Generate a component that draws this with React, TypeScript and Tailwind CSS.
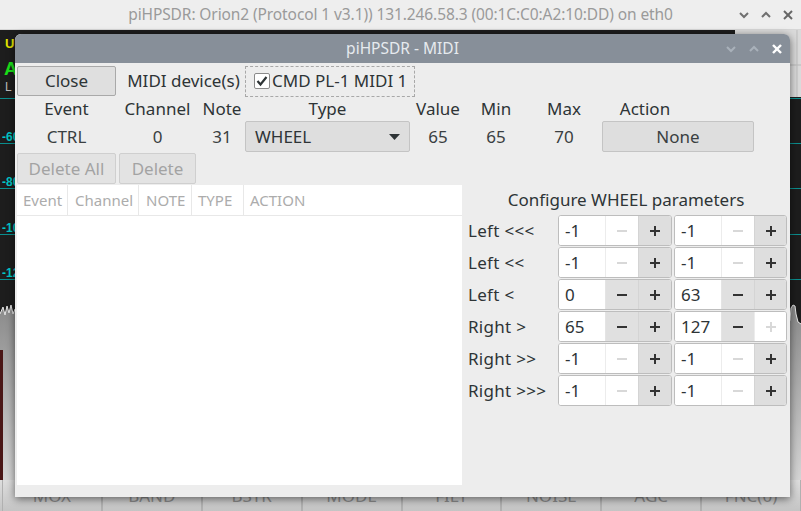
import React from "react";

const FONT = "font-['Noto_Sans',sans-serif]";

function Minus({ on }: { on: boolean }) {
  return (
    <svg width="12" height="12" viewBox="0 0 12 12">
      <line x1="1" y1="6" x2="11" y2="6" stroke={on ? "#333" : "#d8d8d8"} strokeWidth="2" />
    </svg>
  );
}

function Plus({ on }: { on: boolean }) {
  return (
    <svg width="12" height="12" viewBox="0 0 12 12">
      <line x1="1" y1="6" x2="11" y2="6" stroke={on ? "#333" : "#d8d8d8"} strokeWidth="2" />
      <line x1="6" y1="1" x2="6" y2="11" stroke={on ? "#333" : "#d8d8d8"} strokeWidth="2" />
    </svg>
  );
}

function Spin({ value, minus, plus, w }: { value: string; minus: boolean; plus: boolean; w: string }) {
  return (
    <div className={`flex h-[31px] border border-[#bdbdbd] rounded-[3px] overflow-hidden bg-white ${w}`}>
      <div className="w-[46px] flex items-center pl-[6px] text-[#2e3436] bg-white">{value}</div>
      <div
        className={
          minus
            ? "w-[33px] flex items-center justify-center border-l border-[#e4e4e4] bg-[#e0e0e0]"
            : "w-[33px] flex items-center justify-center border-l border-[#ececec] bg-white"
        }
      >
        <Minus on={minus} />
      </div>
      <div
        className={
          plus
            ? "flex-1 flex items-center justify-center border-l border-[#d4d4d4] bg-[#dedede]"
            : "flex-1 flex items-center justify-center border-l border-[#ececec] bg-white"
        }
      >
        <Plus on={plus} />
      </div>
    </div>
  );
}

function ChevDown({ color, sw = 2 }: { color: string; sw?: number }) {
  return (
    <svg width="10" height="8" viewBox="0 0 10 8">
      <polyline points="1,2 5,6 9,2" fill="none" stroke={color} strokeWidth={sw} />
    </svg>
  );
}
function ChevUp({ color, sw = 2 }: { color: string; sw?: number }) {
  return (
    <svg width="10" height="8" viewBox="0 0 10 8">
      <polyline points="1,6 5,2 9,6" fill="none" stroke={color} strokeWidth={sw} />
    </svg>
  );
}
function Close({ color, sw = 2 }: { color: string; sw?: number }) {
  return (
    <svg width="10" height="10" viewBox="0 0 10 10">
      <line x1="1" y1="1" x2="9" y2="9" stroke={color} strokeWidth={sw} />
      <line x1="9" y1="1" x2="1" y2="9" stroke={color} strokeWidth={sw} />
    </svg>
  );
}

const rows: { label: string; a: [string, boolean, boolean]; b: [string, boolean, boolean] }[] = [
  { label: "Left <<<", a: ["-1", false, true], b: ["-1", false, true] },
  { label: "Left <<", a: ["-1", false, true], b: ["-1", false, true] },
  { label: "Left <", a: ["0", true, true], b: ["63", true, true] },
  { label: "Right >", a: ["65", true, true], b: ["127", true, false] },
  { label: "Right >>", a: ["-1", false, true], b: ["-1", false, true] },
  { label: "Right >>>", a: ["-1", false, true], b: ["-1", false, true] },
];

const bottomButtons = ["MOX", "BAND", "BSTR", "MODE", "FILT", "NOISE", "AGC", "FNC(0)"];

function Panadapter() {
  const lines = [68, 113, 158, 204, 249, 295];
  const labels = [
    { t: "-60", y: 111 },
    { t: "-80", y: 156 },
    { t: "-100", y: 202 },
    { t: "-120", y: 247 },
    { t: "-140", y: 293 },
  ];
  return (
    <svg width="801" height="450" viewBox="0 0 801 450" className="block">
      <defs>
        <linearGradient id="fillg" x1="0" y1="0" x2="0" y2="1">
          <stop offset="0" stopColor="#8a8a8a" />
          <stop offset="1" stopColor="#d4d4d4" />
        </linearGradient>
      </defs>
      <rect x="0" y="0" width="801" height="450" fill="#1d1d1d" />
      <rect x="735" y="0" width="66" height="67" fill="#dadada" />
      <line x1="735" y1="35" x2="801" y2="35" stroke="#b8b8b8" />
      <line x1="797" y1="0" x2="797" y2="67" stroke="#bdbdbd" />
      {lines.map((y) => (
        <line key={y} x1="0" y1={y + 0.5} x2="801" y2={y + 0.5} stroke="#0b8e8e" strokeWidth="1" />
      ))}
      {labels.map((l) => (
        <text key={l.t} x="2" y={l.y} fill="#00c6c6" fontSize="12" fontFamily="Liberation Sans, sans-serif" fontWeight="bold">
          {l.t}
        </text>
      ))}
      <text x="5" y="18" fill="#e6e600" fontSize="13" fontWeight="bold" fontFamily="Liberation Sans, sans-serif">U</text>
      <text x="4" y="45" fill="#19e019" fontSize="19" fontWeight="bold" fontFamily="Liberation Sans, sans-serif">A</text>
      <text x="5" y="61" fill="#bdbdbd" fontSize="12" fontFamily="Liberation Sans, sans-serif">L</text>
      <polygon points="0,284 3,277 5,285 7,276 9,283 11,275 13,284 15,279 15,450 0,450" fill="url(#fillg)" />
      <polyline points="0,284 3,277 5,285 7,276 9,283 11,275 13,284 15,279" fill="none" stroke="#e8e8e8" strokeWidth="1" />
      <polygon points="788,296 790,290 791,278 793,275 795,276 796,284 798,292 801,294 801,450 788,450" fill="url(#fillg)" />
      <polyline points="788,296 790,290 791,278 793,275 795,276 796,284 798,292 801,294" fill="none" stroke="#e8e8e8" strokeWidth="1" />
      <rect x="0" y="320" width="3" height="130" fill="#4a1616" />
    </svg>
  );
}

export default function App() {
  return (
    <div className={`relative w-[801px] h-[511px] overflow-hidden bg-[#1d1d1d] ${FONT}`}>
      {/* outer window title */}
      <div className="relative h-[30px] bg-[#eeeeee] border-b border-[#d6d6d6] flex items-center justify-center">
        <span className="text-[15.5px] text-[#9a9a9a] tracking-[-0.1px]">
          piHPSDR: Orion2 (Protocol 1 v3.1)) 131.246.58.3 (00:1C:C0:A2:10:DD) on eth0
        </span>
        <div className="absolute right-[8px] top-0 h-[30px] flex items-center gap-[12px]">
          <ChevDown color="#707070" />
          <ChevUp color="#707070" />
          <Close color="#666" />
        </div>
      </div>

      <Panadapter />

      {/* bottom buttons */}
      <div className="h-[31px] flex pl-[2px] bg-gradient-to-b from-[#dedede] to-[#c4c4c4]">
        {bottomButtons.map((b) => (
          <div key={b} className="flex-1 flex items-center justify-center border-l border-r border-[#b0b0b0] text-[17px] text-[#8a8a8a]">
            {b}
          </div>
        ))}
      </div>

      {/* MIDI dialog */}
      <div className="absolute left-[15px] top-[34px] w-[775px] h-[463px] rounded-t-[6px] overflow-hidden bg-[#ededed] shadow-[0_2px_8px_rgba(0,0,0,0.55)] flex flex-col">
        <div className="relative h-[29px] bg-[#878f99] flex items-center justify-center">
          <span className="text-[15.5px] text-[#e6eaee]">piHPSDR - MIDI</span>
          <div className="absolute right-[8px] top-0 h-[29px] flex items-center gap-[13px]">
            <ChevDown color="#a9b1ba" />
            <ChevUp color="#a9b1ba" />
            <Close color="#ffffff" sw={2.4} />
          </div>
        </div>

        <div className="flex-1 flex flex-col pl-[2px] pt-[2px] text-[17px] text-[#2e3436]">
          <div className="grid grid-cols-[102px_80px_46px_165px_56px_60px_76px_152px]">
            {/* row 1 */}
            <div className="h-[32px] flex items-center">
              <button className="w-[99px] h-[30px] bg-[#dfdfdf] border border-[#a9a9a9] rounded-[2px] text-[#2e3436]">Close</button>
            </div>
            <div className="col-span-2 h-[32px] flex items-center justify-center pl-[3px]">MIDI device(s)</div>
            <div className="col-span-2 h-[32px] flex items-center">
              <div className="w-[170px] h-[31px] border border-dashed border-[#a8a8a8] flex items-center pl-[8px] gap-[2px]">
                <div className="w-[16px] h-[16px] bg-white border border-[#8a8a8a] rounded-[2px] flex items-center justify-center">
                  <svg width="12" height="12" viewBox="0 0 12 12">
                    <polyline points="1.5,6 4.5,9.5 10.5,2" fill="none" stroke="#2e3436" strokeWidth="2.2" />
                  </svg>
                </div>
                <span>CMD PL-1 MIDI 1</span>
              </div>
            </div>
            <div className="col-span-3" />

            {/* header */}
            <div className="h-[24px] flex items-center justify-center pr-[3px]">Event</div>
            <div className="h-[24px] flex items-center justify-center pr-[3px]">Channel</div>
            <div className="h-[24px] flex items-center justify-center">Note</div>
            <div className="h-[24px] flex items-center justify-center">Type</div>
            <div className="h-[24px] flex items-center justify-center">Value</div>
            <div className="h-[24px] flex items-center justify-center">Min</div>
            <div className="h-[24px] flex items-center justify-center">Max</div>
            <div className="h-[24px] flex items-center justify-center pr-[66px]">Action</div>

            {/* values */}
            <div className="h-[32px] flex items-center justify-center pr-[3px] text-[#3a3f41]">CTRL</div>
            <div className="h-[32px] flex items-center justify-center pr-[3px] text-[#3a3f41]">0</div>
            <div className="h-[32px] flex items-center justify-center text-[#3a3f41]">31</div>
            <div className="h-[32px] flex items-start">
              <div className="w-[165px] h-[31px] bg-[#dedede] border border-[#c4c4c4] rounded-[2px] flex items-center justify-between pl-[9px] pr-[9px]">
                <span>WHEEL</span>
                <svg width="11" height="6" viewBox="0 0 11 6">
                  <polygon points="0,0 11,0 5.5,6" fill="#2e3436" />
                </svg>
              </div>
            </div>
            <div className="h-[32px] flex items-center justify-center text-[#3a3f41]">65</div>
            <div className="h-[32px] flex items-center justify-center text-[#3a3f41]">65</div>
            <div className="h-[32px] flex items-center justify-center text-[#3a3f41]">70</div>
            <div className="h-[32px] flex items-start">
              <div className="w-[152px] h-[31px] bg-[#dedede] border border-[#c4c4c4] rounded-[2px] flex items-center justify-center text-[#3a3f41]">None</div>
            </div>

            {/* delete buttons */}
            <div className="h-[32px] flex items-start">
              <div className="w-[99px] h-[31px] bg-[#e3e3e3] border border-[#cfcfcf] rounded-[2px] flex items-center justify-center text-[#a3a3a3]">Delete All</div>
            </div>
            <div className="h-[32px] flex items-start">
              <div className="w-[77px] h-[31px] bg-[#e3e3e3] border border-[#cfcfcf] rounded-[2px] flex items-center justify-center text-[#a3a3a3]">Delete</div>
            </div>
          </div>

          <div className="flex">
            {/* list */}
            <div className="w-[445px] h-[300px] bg-white">
              <div className="h-[31px] flex border-b border-[#e8e8e8] text-[15px] text-[#acacac]">
                <div className="w-[51px] flex items-center pl-[6px] border-r border-[#e8e8e8]">Event</div>
                <div className="w-[71px] flex items-center pl-[7px] border-r border-[#e8e8e8]">Channel</div>
                <div className="w-[53px] flex items-center pl-[7px] border-r border-[#e8e8e8]">NOTE</div>
                <div className="w-[52px] flex items-center pl-[6px] border-r border-[#e8e8e8]">TYPE</div>
                <div className="flex-1 flex items-center pl-[6px]">ACTION</div>
              </div>
            </div>

            {/* wheel params */}
            <div className="flex-1 flex flex-col">
              <div className="h-[30px] flex items-center justify-center">Configure WHEEL parameters</div>
              <div className="flex flex-col gap-[1px]">
                {rows.map((r) => (
                  <div key={r.label} className="flex items-center h-[31px]">
                    <div className="w-[96px] pl-[6px] tracking-[0.3px]">{r.label}</div>
                    <Spin value={r.a[0]} minus={r.a[1]} plus={r.a[2]} w="w-[114px]" />
                    <div className="w-[2px]" />
                    <Spin value={r.b[0]} minus={r.b[1]} plus={r.b[2]} w="w-[113px]" />
                  </div>
                ))}
              </div>
            </div>
          </div>
        </div>
      </div>
    </div>
  );
}
